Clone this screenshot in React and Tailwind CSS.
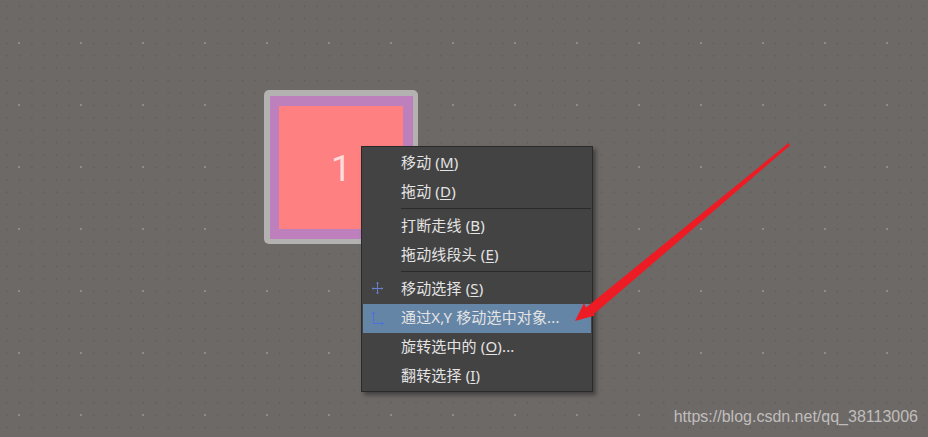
import React from 'react';

const MenuRow = ({ label, hotkey, tail, icon, active }) => (
  <div className={`relative h-[29px] flex items-center pl-[38px] pb-[2px] text-[15px] tracking-[0.15px] text-[#e4e4e4] ${active ? 'bg-[#6485a6]' : ''}`}>
    {icon && <span className="absolute left-[8px] top-[6px]">{icon}</span>}
    <span>
      {label}
      {hotkey && (
        <>
          {' ('}
          <span className="underline underline-offset-2">{hotkey}</span>
          {')'}
        </>
      )}
      {tail}
    </span>
  </div>
);

const Separator = () => (
  <div className="h-[5px] pt-[1px] pl-[38px]">
    <div className="h-[1px] bg-[#2a2a2a]" />
  </div>
);

const PlusIcon = () => (
  <svg width="14" height="14" viewBox="0 0 14 14" fill="none" stroke="#6680cc" strokeWidth="1">
    <path d="M6.5 1v12M1 7.5h11" />
    <path d="M5 3l1.5-2L8 3M3 6l-2 1.5L3 9M10 6l2 1.5L10 9M5 11l1.5 2L8 11" strokeOpacity="0.45" />
  </svg>
);

const MoveXYIcon = () => (
  <svg width="14" height="16" viewBox="0 0 14 16" fill="none" stroke="#4f6fdc" strokeWidth="1">
    <path d="M2.5 2v11.5H12.5" />
    <path d="M1 4l1.5-2L4 4M10.5 12l2 1.5-2 1.5" />
  </svg>
);

export default function App() {
  return (
    <div className="relative w-[928px] h-[437px] overflow-hidden bg-[#6d6967] bg-[radial-gradient(circle,#8f8b89_0.7px,transparent_1px),radial-gradient(circle,#5b5856_0.8px,transparent_1px)] bg-[size:62px_62px,12.4px_12.4px] bg-[position:-12px_12px,0.9px_0.1px] font-['Noto_Sans','Noto_Sans_CJK_SC',sans-serif]">
      {/* pad */}
      <div className="absolute left-[264px] top-[90px] w-[154px] h-[154px] rounded-[5px] bg-[#b4b2b0] pt-[6px] pl-[6px] pr-[5px] pb-[5px]">
        <div className="w-full h-full bg-[#bd80bd] pt-[10px] pl-[9px]">
          <div className="w-[124px] h-[123px] pt-[3px] bg-[#ff8080] flex items-center justify-center text-[36px] text-[#ffdcdc] font-['Roboto',sans-serif]">
            1
          </div>
        </div>
      </div>

      {/* context menu */}
      <div className="absolute left-[361px] top-[146px] w-[232px] h-[246px] bg-[#434343] border border-[#2a2a2a] pt-[2px] px-[1px] shadow-[3px_3px_4px_rgba(40,40,40,0.6)]">
        <MenuRow label="移动" hotkey="M" />
        <MenuRow label="拖动" hotkey="D" />
        <Separator />
        <MenuRow label="打断走线" hotkey="B" />
        <MenuRow label="拖动线段头" hotkey="E" />
        <Separator />
        <MenuRow label="移动选择" hotkey="S" icon={<PlusIcon />} />
        <MenuRow label="通过X,Y 移动选中对象..." icon={<MoveXYIcon />} active />
        <MenuRow label="旋转选中的" hotkey="O" tail="..." />
        <MenuRow label="翻转选择" hotkey="I" />
      </div>

      {/* red arrow annotation */}
      <svg className="absolute left-0 top-0" width="928" height="437" viewBox="0 0 928 437">
        <polygon points="575,321 584,303 586,307.5 788.5,143 790,145.5 594,314 595,315.5" fill="#ed1c24" />
      </svg>

      <div className="absolute right-[10px] top-[407px] text-[16px] leading-[20px] text-[#c0bebc] font-['Liberation_Sans',sans-serif]">
        https://blog.csdn.net/qq_38113006
      </div>
    </div>
  );
}
